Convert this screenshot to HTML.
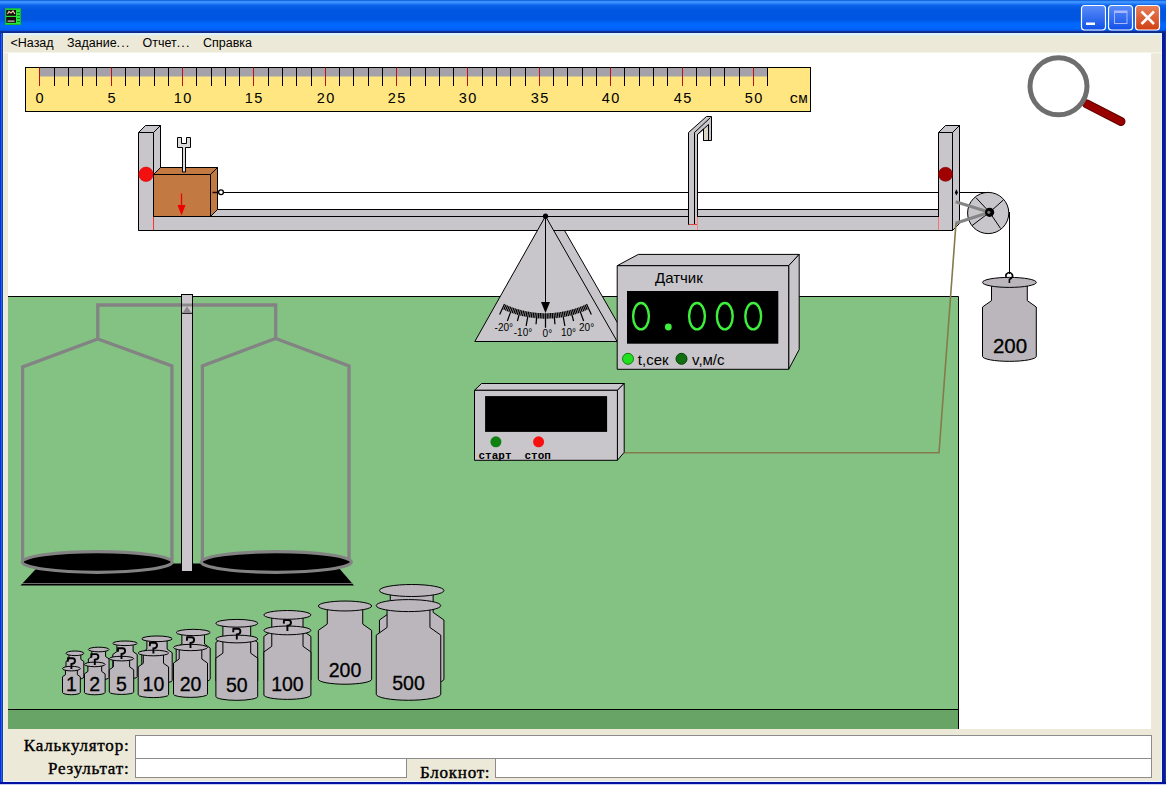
<!DOCTYPE html><html><head><meta charset="utf-8"><style>
html,body{margin:0;padding:0;width:1166px;height:785px;overflow:hidden;background:#0a3ad8;}
svg{display:block;position:absolute;left:0;top:0;}
svg{font-family:"Liberation Sans",sans-serif;} .mono{font-family:"Liberation Mono",monospace;} .serif{font-family:"Liberation Serif",serif;}
</style></head><body>
<svg width="1166" height="785" viewBox="0 0 1166 785">
<defs>
<linearGradient id="tb" x1="0" y1="0" x2="0" y2="1"><stop offset="0" stop-color="#0048c8"/><stop offset="0.035" stop-color="#3a93ff"/><stop offset="0.08" stop-color="#3a90ff"/><stop offset="0.16" stop-color="#0a62ea"/><stop offset="0.3" stop-color="#0056e0"/><stop offset="0.6" stop-color="#0056e2"/><stop offset="0.72" stop-color="#0068ff"/><stop offset="0.88" stop-color="#0064fa"/><stop offset="0.93" stop-color="#0650e0"/><stop offset="0.96" stop-color="#102a88"/><stop offset="1" stop-color="#102a88"/></linearGradient>
<linearGradient id="bmin" x1="0" y1="0" x2="0" y2="1"><stop offset="0" stop-color="#5a8cf8"/><stop offset="1" stop-color="#1050e8"/></linearGradient>
<linearGradient id="bcls" x1="0" y1="0" x2="0" y2="1"><stop offset="0" stop-color="#e8805a"/><stop offset="1" stop-color="#d04010"/></linearGradient>
</defs>
<rect x="0" y="0" width="1166" height="785" fill="#0831d9"/>
<rect x="0" y="0" width="1166" height="33" fill="url(#tb)"/>
<rect x="3" y="33" width="1159" height="749" fill="#ece9d8"/>
<rect x="0" y="33" width="1" height="752" fill="#0030e0"/><rect x="1" y="33" width="1" height="752" fill="#3060e0"/><rect x="2" y="33" width="1" height="752" fill="#1a4090"/><rect x="3" y="33" width="1" height="749" fill="#e0f6ff"/>
<rect x="1161" y="33" width="1" height="749" fill="#e0f4ff"/><rect x="1162" y="33" width="3" height="752" fill="#0a1aa0"/><rect x="1165" y="33" width="1" height="752" fill="#1a3a90"/>
<rect x="3" y="781" width="1159" height="1" fill="#e8f4ff"/><rect x="0" y="782" width="1166" height="2" fill="#0010a0"/><rect x="0" y="784" width="1166" height="1" fill="#c8d0f4"/>
<rect x="3" y="33" width="1159" height="2.5" fill="#e2f2fc"/>
<rect x="3" y="35.5" width="1159" height="1" fill="#e4ecd8"/>
<rect x="3" y="52" width="1159" height="1.5" fill="#f6f4ea"/>
<rect x="5" y="8.5" width="16" height="16.5" fill="#22e838"/>
<rect x="5.5" y="9" width="15" height="15.5" fill="none" stroke="#18b828" stroke-width="1"/>
<rect x="6.2" y="10" width="9.8" height="5.8" fill="#1a0c0c"/>
<rect x="6.2" y="17" width="9.8" height="5.8" fill="#1a0c0c"/>
<path d="M7.5 14 L9 11.5 L11 13 L13 11 L15 14" stroke="#e8c8a0" stroke-width="1.2" fill="none"/>
<rect x="7.5" y="20.5" width="7" height="1.2" fill="#d0c8e0"/>
<rect x="17" y="12" width="3" height="1" fill="#0a8a20"/><rect x="17" y="15" width="3" height="1" fill="#0a8a20"/><rect x="17" y="18" width="3" height="1" fill="#0a8a20"/><rect x="17" y="21" width="3" height="1" fill="#0a8a20"/>
<rect x="1081.5" y="5.5" width="24" height="24.5" rx="3" fill="url(#bmin)" stroke="#fff" stroke-width="1.2"/>
<rect x="1108.5" y="5.5" width="24" height="24.5" rx="3" fill="url(#bmin)" stroke="#fff" stroke-width="1.2"/>
<rect x="1135.5" y="5.5" width="24" height="24.5" rx="3" fill="url(#bcls)" stroke="#fff" stroke-width="1.2"/>
<rect x="1086" y="22.5" width="9" height="2.5" fill="#fff"/>
<rect x="1114.5" y="11" width="12.5" height="12.5" fill="none" stroke="#a8b8ff" stroke-width="1"/>
<rect x="1114.5" y="11" width="12.5" height="2" fill="#a8b8ff"/>
<path d="M1141.5 11.5 L1154 24 M1154 11.5 L1141.5 24" stroke="#fff" stroke-width="2.5"/>
<g font-size="12.5" fill="#000">
<text x="10.5" y="46.8">&lt;Назад</text>
<text x="67" y="46.8">Задание<tspan letter-spacing="1.1">...</tspan></text>
<text x="142.5" y="46.8">Отчет<tspan letter-spacing="1.1">...</tspan></text>
<text x="203" y="46.8">Справка</text>
</g>
<rect x="8" y="53" width="1143" height="676" fill="#fff"/>
<rect x="8" y="296" width="950" height="433" fill="#84c284"/>
<rect x="8" y="709" width="950" height="20" fill="#68a466"/>
<path d="M8 296.5 H958.5 V729 M8 709.5 H958" stroke="#000" stroke-width="1" fill="none"/>
<rect x="25.5" y="67.5" width="785" height="44" fill="#ffe680" stroke="#000" stroke-width="1"/>
<rect x="40" y="68" width="727.5" height="8.5" fill="#a4a2a8"/>
<line x1="39.50" y1="67.5" x2="39.50" y2="86" stroke="#c01010" stroke-width="1"/><line x1="54.50" y1="67.5" x2="54.50" y2="86" stroke="#000" stroke-width="1"/><line x1="68.50" y1="67.5" x2="68.50" y2="86" stroke="#000" stroke-width="1"/><line x1="82.50" y1="67.5" x2="82.50" y2="86" stroke="#000" stroke-width="1"/><line x1="96.50" y1="67.5" x2="96.50" y2="86" stroke="#000" stroke-width="1"/><line x1="111.50" y1="67.5" x2="111.50" y2="86" stroke="#c01010" stroke-width="1"/><line x1="125.50" y1="67.5" x2="125.50" y2="86" stroke="#000" stroke-width="1"/><line x1="139.50" y1="67.5" x2="139.50" y2="86" stroke="#000" stroke-width="1"/><line x1="154.50" y1="67.5" x2="154.50" y2="86" stroke="#000" stroke-width="1"/><line x1="168.50" y1="67.5" x2="168.50" y2="86" stroke="#000" stroke-width="1"/><line x1="182.50" y1="67.5" x2="182.50" y2="86" stroke="#c01010" stroke-width="1"/><line x1="196.50" y1="67.5" x2="196.50" y2="86" stroke="#000" stroke-width="1"/><line x1="211.50" y1="67.5" x2="211.50" y2="86" stroke="#000" stroke-width="1"/><line x1="225.50" y1="67.5" x2="225.50" y2="86" stroke="#000" stroke-width="1"/><line x1="239.50" y1="67.5" x2="239.50" y2="86" stroke="#000" stroke-width="1"/><line x1="253.50" y1="67.5" x2="253.50" y2="86" stroke="#c01010" stroke-width="1"/><line x1="268.50" y1="67.5" x2="268.50" y2="86" stroke="#000" stroke-width="1"/><line x1="282.50" y1="67.5" x2="282.50" y2="86" stroke="#000" stroke-width="1"/><line x1="296.50" y1="67.5" x2="296.50" y2="86" stroke="#000" stroke-width="1"/><line x1="311.50" y1="67.5" x2="311.50" y2="86" stroke="#000" stroke-width="1"/><line x1="325.50" y1="67.5" x2="325.50" y2="86" stroke="#c01010" stroke-width="1"/><line x1="339.50" y1="67.5" x2="339.50" y2="86" stroke="#000" stroke-width="1"/><line x1="353.50" y1="67.5" x2="353.50" y2="86" stroke="#000" stroke-width="1"/><line x1="368.50" y1="67.5" x2="368.50" y2="86" stroke="#000" stroke-width="1"/><line x1="382.50" y1="67.5" x2="382.50" y2="86" stroke="#000" stroke-width="1"/><line x1="396.50" y1="67.5" x2="396.50" y2="86" stroke="#c01010" stroke-width="1"/><line x1="410.50" y1="67.5" x2="410.50" y2="86" stroke="#000" stroke-width="1"/><line x1="425.50" y1="67.5" x2="425.50" y2="86" stroke="#000" stroke-width="1"/><line x1="439.50" y1="67.5" x2="439.50" y2="86" stroke="#000" stroke-width="1"/><line x1="453.50" y1="67.5" x2="453.50" y2="86" stroke="#000" stroke-width="1"/><line x1="467.50" y1="67.5" x2="467.50" y2="86" stroke="#c01010" stroke-width="1"/><line x1="482.50" y1="67.5" x2="482.50" y2="86" stroke="#000" stroke-width="1"/><line x1="496.50" y1="67.5" x2="496.50" y2="86" stroke="#000" stroke-width="1"/><line x1="510.50" y1="67.5" x2="510.50" y2="86" stroke="#000" stroke-width="1"/><line x1="525.50" y1="67.5" x2="525.50" y2="86" stroke="#000" stroke-width="1"/><line x1="539.50" y1="67.5" x2="539.50" y2="86" stroke="#c01010" stroke-width="1"/><line x1="553.50" y1="67.5" x2="553.50" y2="86" stroke="#000" stroke-width="1"/><line x1="567.50" y1="67.5" x2="567.50" y2="86" stroke="#000" stroke-width="1"/><line x1="582.50" y1="67.5" x2="582.50" y2="86" stroke="#000" stroke-width="1"/><line x1="596.50" y1="67.5" x2="596.50" y2="86" stroke="#000" stroke-width="1"/><line x1="610.50" y1="67.5" x2="610.50" y2="86" stroke="#c01010" stroke-width="1"/><line x1="624.50" y1="67.5" x2="624.50" y2="86" stroke="#000" stroke-width="1"/><line x1="639.50" y1="67.5" x2="639.50" y2="86" stroke="#000" stroke-width="1"/><line x1="653.50" y1="67.5" x2="653.50" y2="86" stroke="#000" stroke-width="1"/><line x1="667.50" y1="67.5" x2="667.50" y2="86" stroke="#000" stroke-width="1"/><line x1="682.50" y1="67.5" x2="682.50" y2="86" stroke="#c01010" stroke-width="1"/><line x1="696.50" y1="67.5" x2="696.50" y2="86" stroke="#000" stroke-width="1"/><line x1="710.50" y1="67.5" x2="710.50" y2="86" stroke="#000" stroke-width="1"/><line x1="724.50" y1="67.5" x2="724.50" y2="86" stroke="#000" stroke-width="1"/><line x1="739.50" y1="67.5" x2="739.50" y2="86" stroke="#000" stroke-width="1"/><line x1="753.50" y1="67.5" x2="753.50" y2="86" stroke="#c01010" stroke-width="1"/><line x1="767.50" y1="67.5" x2="767.50" y2="86" stroke="#000" stroke-width="1"/>
<g font-size="14.5" fill="#000" text-anchor="middle" letter-spacing="1.6">
<text x="40.30" y="102.7">0</text>
<text x="112.30" y="102.7">5</text>
<text x="183.30" y="102.7">10</text>
<text x="254.30" y="102.7">15</text>
<text x="326.30" y="102.7">20</text>
<text x="397.30" y="102.7">25</text>
<text x="468.30" y="102.7">30</text>
<text x="540.30" y="102.7">35</text>
<text x="611.30" y="102.7">40</text>
<text x="683.30" y="102.7">45</text>
<text x="754.30" y="102.7">50</text>
</g>
<text x="798.5" y="102.7" class="mono" font-size="15" text-anchor="middle">см</text>
<line x1="1086.5" y1="103.8" x2="1121" y2="121.5" stroke="#600000" stroke-width="9" stroke-linecap="round"/>
<line x1="1086.5" y1="103.8" x2="1121" y2="121.5" stroke="#980000" stroke-width="7" stroke-linecap="round"/>
<circle cx="1058.5" cy="86.3" r="28.5" fill="none" stroke="#6e6e6e" stroke-width="5"/>
<line x1="223" y1="192.5" x2="990" y2="192.5" stroke="#000" stroke-width="1"/>
<polygon points="153.50,216.50 160.50,209.50 938.50,209.50 938.50,216.50" fill="#c8c6ca" stroke="#000" stroke-width="1" stroke-linejoin="miter" />
<polygon points="138.50,216.50 952.50,216.50 952.50,230.50 138.50,230.50" fill="#c8c6ca" stroke="#000" stroke-width="1" stroke-linejoin="miter" />
<polygon points="138.50,132.50 145.50,125.50 160.50,125.50 153.50,132.50" fill="#c8c6ca" stroke="#000" stroke-width="1" stroke-linejoin="miter" />
<polygon points="153.50,132.50 160.50,125.50 160.50,209.50 153.50,216.50" fill="#c8c6ca" stroke="#000" stroke-width="1" stroke-linejoin="miter" />
<polygon points="138.50,132.50 153.50,132.50 153.50,230.50 138.50,230.50" fill="#c8c6ca" stroke="#000" stroke-width="1" stroke-linejoin="miter" />
<polygon points="938.50,132.50 945.50,125.50 959.50,125.50 952.50,132.50" fill="#c8c6ca" stroke="#000" stroke-width="1" stroke-linejoin="miter" />
<polygon points="952.50,132.50 959.50,125.50 959.50,223.50 952.50,230.50" fill="#c8c6ca" stroke="#000" stroke-width="1" stroke-linejoin="miter" />
<polygon points="938.50,132.50 952.50,132.50 952.50,230.50 938.50,230.50" fill="#c8c6ca" stroke="#000" stroke-width="1" stroke-linejoin="miter" />
<line x1="153.5" y1="217" x2="153.5" y2="230" stroke="#ff3030" stroke-width="1"/>
<line x1="938.5" y1="217" x2="938.5" y2="230" stroke="#ff7070" stroke-width="1"/>
<circle cx="146" cy="174.3" r="7.2" fill="#f41010" stroke="#e00000" stroke-width="0.6"/>
<circle cx="945.5" cy="174.3" r="7" fill="#a00000" stroke="#800000" stroke-width="0.6"/>
<path d="M956.4 189.2 L958 192.5 L956.4 195.6 L954.8 192.5 Z" fill="#000"/>
<polygon points="153.50,174.50 160.50,167.50 217.50,167.50 210.50,174.50" fill="#c27a42" stroke="#000" stroke-width="1" stroke-linejoin="miter" />
<polygon points="210.50,174.50 217.50,167.50 217.50,209.50 210.50,216.50" fill="#c27a42" stroke="#000" stroke-width="1" stroke-linejoin="miter" />
<polygon points="153.50,174.50 210.50,174.50 210.50,216.50 153.50,216.50" fill="#c27a42" stroke="#000" stroke-width="1" stroke-linejoin="miter" />
<path d="M177.5 137.5 H181.5 V143.5 H186.5 V137.5 H190.5 V147.5 H185.5 V172 H182.5 V147.5 H177.5 Z" fill="#dcdcdc" stroke="#000" stroke-width="1"/>
<line x1="181.5" y1="193.5" x2="181.5" y2="207" stroke="#f00000" stroke-width="1.3"/>
<path d="M177.5 205 L185.5 205 L181.5 215.5 Z" fill="#f00000"/>
<line x1="212.5" y1="192.5" x2="219" y2="192.5" stroke="#200000" stroke-width="1.5"/>
<circle cx="221" cy="192.2" r="2.4" fill="none" stroke="#000" stroke-width="1.3"/>
<polygon points="688.50,224.50 688.50,132.50 706.50,116.50 711.50,116.50 711.50,140.50 703.50,140.50 703.50,129.00 697.50,134.50 697.50,224.50" fill="#c8c6ca" stroke="#000" stroke-width="1" stroke-linejoin="miter" />
<rect x="704" y="128" width="4" height="12" fill="#d8d4c8"/>
<path d="M694.5 132.5 V224.5 M694.5 132.5 L710.5 117.5 M708.5 124.5 V140.5 M697.5 134.5 L708.5 124.5 M703.5 129 V140.5" stroke="#000" stroke-width="1" fill="none"/>
<line x1="689" y1="224.5" x2="697" y2="224.5" stroke="#e04040" stroke-width="1"/>
<line x1="697.5" y1="217" x2="697.5" y2="230" stroke="#ff8080" stroke-width="1"/>
<polygon points="553.00,231.00 564.60,231.00 624.20,334.50 617.20,341.50" fill="#c8c6ca" stroke="none" stroke-width="1" stroke-linejoin="miter" />
<line x1="564.6" y1="230.6" x2="624.2" y2="334.5" stroke="#000" stroke-width="1"/>
<polygon points="545.50,216.20 474.80,341.50 617.20,341.50" fill="#c8c6ca" stroke="#000" stroke-width="1" stroke-linejoin="miter" />
<path d="M504.51 304.11 L499.65 314.53 M506.05 304.81 L503.81 309.84 M507.60 305.49 L505.45 310.55 M509.16 306.14 L507.10 311.24 M510.74 306.76 L508.77 311.89 M512.32 307.35 L507.36 320.98 M513.92 307.92 L512.13 313.12 M515.53 308.45 L513.83 313.68 M517.14 308.96 L515.53 314.22 M518.76 309.44 L517.25 314.73 M520.39 309.89 L517.42 321.00 M522.03 310.32 L520.70 315.66 M523.68 310.71 L522.44 316.07 M525.33 311.08 L524.19 316.46 M526.99 311.42 L525.94 316.82 M528.66 311.73 L526.14 326.01 M530.33 312.01 L529.47 317.44 M532.00 312.26 L531.23 317.70 M533.68 312.48 L533.01 317.94 M535.36 312.67 L534.79 318.14 M537.05 312.83 L536.04 324.29 M538.73 312.96 L538.35 318.45 M540.42 313.07 L540.14 318.56 M542.11 313.14 L541.92 318.64 M543.81 313.19 L543.71 318.68 M545.50 313.20 L545.50 327.70 M547.19 313.19 L547.29 318.68 M548.89 313.14 L549.08 318.64 M550.58 313.07 L550.86 318.56 M552.27 312.96 L552.65 318.45 M553.95 312.83 L554.96 324.29 M555.64 312.67 L556.21 318.14 M557.32 312.48 L557.99 317.94 M559.00 312.26 L559.77 317.70 M560.67 312.01 L561.53 317.44 M562.34 311.73 L564.86 326.01 M564.01 311.42 L565.06 316.82 M565.67 311.08 L566.81 316.46 M567.32 310.71 L568.56 316.07 M568.97 310.32 L570.30 315.66 M570.61 309.89 L573.58 321.00 M572.24 309.44 L573.75 314.73 M573.86 308.96 L575.47 314.22 M575.47 308.45 L577.17 313.68 M577.08 307.92 L578.87 313.12 M578.68 307.35 L583.64 320.98 M580.26 306.76 L582.23 311.89 M581.84 306.14 L583.90 311.24 M583.40 305.49 L585.55 310.55 M584.95 304.81 L587.19 309.84 M586.49 304.11 L591.35 314.53" stroke="#000" stroke-width="1.25" fill="none"/>
<g font-size="10" fill="#000" text-anchor="middle">
<text x="503.8" y="330.5">-20°</text>
<text x="523" y="336">-10°</text>
<text x="547.4" y="336.5">0°</text>
<text x="568.5" y="336">10°</text>
<text x="586.6" y="330.5">20°</text>
</g>
<line x1="545.5" y1="216.2" x2="545.5" y2="305" stroke="#000" stroke-width="1"/>
<path d="M541 302 L550 302 L545.5 313 Z" fill="#000"/>
<circle cx="545.5" cy="216.2" r="2.6" fill="#000"/>
<circle cx="988.2" cy="213" r="20.6" fill="#c8c6ca" stroke="#000" stroke-width="1"/>
<path d="M989.6 212.3 L975.9 197.6 M989.6 212.3 L1003.3 200 M989.6 212.3 L972 225.6 M989.6 212.3 L1000.5 228.4" stroke="#000" stroke-width="1"/>
<path d="M955.6 201.8 L989.6 212.3 L955.6 223.2" stroke="#858585" stroke-width="3" fill="none"/>
<circle cx="989.6" cy="212.3" r="4.6" fill="#000"/>
<circle cx="988.8" cy="212.3" r="1.6" fill="#777"/>
<line x1="1009.5" y1="212" x2="1009.5" y2="274" stroke="#000" stroke-width="1"/>
<polyline points="956,223 939,452.7 624,452.7" fill="none" stroke="#857a4c" stroke-width="1.6"/>
<polygon points="617.20,265.70 638.30,254.40 799.20,254.40 788.70,265.70" fill="#c8c6ca" stroke="#000" stroke-width="1" stroke-linejoin="miter" />
<polygon points="788.70,265.70 799.20,254.40 799.20,349.50 788.70,369.30" fill="#c8c6ca" stroke="#000" stroke-width="1" stroke-linejoin="miter" />
<polygon points="617.20,265.70 788.70,265.70 788.70,369.30 617.20,369.30" fill="#c8c6ca" stroke="#000" stroke-width="1" stroke-linejoin="miter" />
<rect x="627" y="291" width="151.3" height="52.7" fill="#000"/>
<text x="655" y="282.8" font-size="15" fill="#000">Датчик</text>
<ellipse cx="641" cy="316.2" rx="7.9" ry="13.2" fill="none" stroke="#3cf03c" stroke-width="2.4"/>
<ellipse cx="697" cy="316.2" rx="7.9" ry="13.2" fill="none" stroke="#3cf03c" stroke-width="2.4"/>
<ellipse cx="724.8" cy="316.2" rx="7.9" ry="13.2" fill="none" stroke="#3cf03c" stroke-width="2.4"/>
<ellipse cx="753.2" cy="316.2" rx="7.9" ry="13.2" fill="none" stroke="#3cf03c" stroke-width="2.4"/>
<circle cx="668.3" cy="327" r="3.4" fill="#3cf03c"/>
<circle cx="628" cy="358.8" r="5.5" fill="#20e020" stroke="#108010" stroke-width="1"/>
<circle cx="681.5" cy="358.8" r="5.5" fill="#107010" stroke="#084008" stroke-width="1"/>
<text x="637.8" y="364.5" font-size="15" fill="#000">t,сек</text>
<text x="692" y="364.5" font-size="15" fill="#000">v,м/с</text>
<polygon points="474.50,390.30 481.50,383.50 624.20,383.50 617.40,390.30" fill="#c8c6ca" stroke="#000" stroke-width="1" stroke-linejoin="miter" />
<polygon points="617.40,390.30 624.20,383.50 624.20,452.30 617.40,460.30" fill="#c8c6ca" stroke="#000" stroke-width="1" stroke-linejoin="miter" />
<polygon points="474.50,390.30 617.40,390.30 617.40,460.30 474.50,460.30" fill="#c8c6ca" stroke="#000" stroke-width="1" stroke-linejoin="miter" />
<rect x="485.1" y="396.1" width="122" height="35.8" fill="#000"/>
<circle cx="495.9" cy="441.8" r="5.5" fill="#108010"/>
<circle cx="538.6" cy="441.8" r="5.5" fill="#f81010"/>
<text x="478.5" y="458.5" class="mono" font-weight="bold" font-size="11" fill="#000">старт</text>
<text x="524.5" y="458.5" class="mono" font-weight="bold" font-size="11" fill="#000">стоп</text>
<path d="M991.51 282.40 L991.51 300.64 L982.50 307.04 L982.50 356.35 A26.90 5.00 0 0 0 1036.30 356.35 L1036.30 307.04 L1027.29 300.64 L1027.29 282.40 Z" fill="#bab6bc" stroke="#000" stroke-width="1"/><ellipse cx="1009.40" cy="282.40" rx="26.90" ry="5.00" fill="#bab6bc" stroke="#000" stroke-width="1"/>
<text x="1010" y="353.2" font-size="20.5" text-anchor="middle" fill="#000" stroke="#000" stroke-width="0.3">200</text>
<path d="M1006.2 277 A3.3 3.1 0 1 1 1011.5 278 L1009.4 279.5 V283" fill="none" stroke="#000" stroke-width="1.6"/>
<path d="M68.98 653.30 L68.98 659.33 L66.00 661.45 L66.00 677.12 A8.90 2.30 0 0 0 83.80 677.12 L83.80 661.45 L80.82 659.33 L80.82 653.30 Z" fill="#bab6bc" stroke="#000" stroke-width="1"/><ellipse cx="74.90" cy="653.30" rx="8.90" ry="2.30" fill="#bab6bc" stroke="#000" stroke-width="1"/>
<path d="M65.48 668.60 L65.48 674.63 L62.50 676.75 L62.50 692.42 A8.90 2.30 0 0 0 80.30 692.42 L80.30 676.75 L77.32 674.63 L77.32 668.60 Z" fill="#bab6bc" stroke="#000" stroke-width="1"/><ellipse cx="71.40" cy="668.60" rx="8.90" ry="2.30" fill="#bab6bc" stroke="#000" stroke-width="1"/>
<path d="M67.80 661.80 L68.00 658.30 L72.60 658.30 Q75.00 658.30 75.00 661.00 Q75.00 663.60 71.40 664.00 L71.40 669.10" fill="none" stroke="#000" stroke-width="1.9"/>
<text x="71.40" y="690.5" font-size="19.5" text-anchor="middle" fill="#000" stroke="#000" stroke-width="0.3">1</text>
<path d="M91.82 649.50 L91.82 656.52 L88.35 658.98 L88.35 677.58 A10.35 2.30 0 0 0 109.05 677.58 L109.05 658.98 L105.58 656.52 L105.58 649.50 Z" fill="#bab6bc" stroke="#000" stroke-width="1"/><ellipse cx="98.70" cy="649.50" rx="10.35" ry="2.30" fill="#bab6bc" stroke="#000" stroke-width="1"/>
<path d="M87.92 664.40 L87.92 671.42 L84.45 673.88 L84.45 692.48 A10.35 2.30 0 0 0 105.15 692.48 L105.15 673.88 L101.68 671.42 L101.68 664.40 Z" fill="#bab6bc" stroke="#000" stroke-width="1"/><ellipse cx="94.80" cy="664.40" rx="10.35" ry="2.30" fill="#bab6bc" stroke="#000" stroke-width="1"/>
<path d="M91.20 657.60 L91.40 654.10 L96.00 654.10 Q98.40 654.10 98.40 656.80 Q98.40 659.40 94.80 659.80 L94.80 664.90" fill="none" stroke="#000" stroke-width="1.9"/>
<text x="94.80" y="690.8" font-size="19.5" text-anchor="middle" fill="#000" stroke="#000" stroke-width="0.3">2</text>
<path d="M116.89 643.30 L116.89 651.57 L112.80 654.48 L112.80 676.81 A12.20 2.30 0 0 0 137.20 676.81 L137.20 654.48 L133.11 651.57 L133.11 643.30 Z" fill="#bab6bc" stroke="#000" stroke-width="1"/><ellipse cx="125.00" cy="643.30" rx="12.20" ry="2.30" fill="#bab6bc" stroke="#000" stroke-width="1"/>
<path d="M113.39 658.60 L113.39 666.87 L109.30 669.78 L109.30 692.11 A12.20 2.30 0 0 0 133.70 692.11 L133.70 669.78 L129.61 666.87 L129.61 658.60 Z" fill="#bab6bc" stroke="#000" stroke-width="1"/><ellipse cx="121.50" cy="658.60" rx="12.20" ry="2.30" fill="#bab6bc" stroke="#000" stroke-width="1"/>
<path d="M117.90 651.80 L118.10 648.30 L122.70 648.30 Q125.10 648.30 125.10 651.00 Q125.10 653.60 121.50 654.00 L121.50 659.10" fill="none" stroke="#000" stroke-width="1.9"/>
<text x="121.50" y="690.5" font-size="19.5" text-anchor="middle" fill="#000" stroke="#000" stroke-width="0.3">5</text>
<path d="M146.89 638.80 L146.89 649.11 L141.80 652.72 L141.80 680.58 A15.20 2.83 0 0 0 172.20 680.58 L172.20 652.72 L167.11 649.11 L167.11 638.80 Z" fill="#bab6bc" stroke="#000" stroke-width="1"/><ellipse cx="157.00" cy="638.80" rx="15.20" ry="2.83" fill="#bab6bc" stroke="#000" stroke-width="1"/>
<path d="M143.29 653.00 L143.29 663.31 L138.20 666.92 L138.20 694.78 A15.20 2.83 0 0 0 168.60 694.78 L168.60 666.92 L163.51 663.31 L163.51 653.00 Z" fill="#bab6bc" stroke="#000" stroke-width="1"/><ellipse cx="153.40" cy="653.00" rx="15.20" ry="2.83" fill="#bab6bc" stroke="#000" stroke-width="1"/>
<path d="M149.80 646.20 L150.00 642.70 L154.60 642.70 Q157.00 642.70 157.00 645.40 Q157.00 648.00 153.40 648.40 L153.40 653.50" fill="none" stroke="#000" stroke-width="1.9"/>
<text x="153.40" y="690.5" font-size="19.5" text-anchor="middle" fill="#000" stroke="#000" stroke-width="0.3">10</text>
<path d="M181.89 632.50 L181.89 644.03 L176.20 648.07 L176.20 679.23 A17.00 3.16 0 0 0 210.20 679.23 L210.20 648.07 L204.50 644.03 L204.50 632.50 Z" fill="#bab6bc" stroke="#000" stroke-width="1"/><ellipse cx="193.20" cy="632.50" rx="17.00" ry="3.16" fill="#bab6bc" stroke="#000" stroke-width="1"/>
<path d="M179.19 647.50 L179.19 659.03 L173.50 663.07 L173.50 694.23 A17.00 3.16 0 0 0 207.50 694.23 L207.50 663.07 L201.81 659.03 L201.81 647.50 Z" fill="#bab6bc" stroke="#000" stroke-width="1"/><ellipse cx="190.50" cy="647.50" rx="17.00" ry="3.16" fill="#bab6bc" stroke="#000" stroke-width="1"/>
<path d="M186.90 640.70 L187.10 637.20 L191.70 637.20 Q194.10 637.20 194.10 639.90 Q194.10 642.50 190.50 642.90 L190.50 648.00" fill="none" stroke="#000" stroke-width="1.9"/>
<text x="190.50" y="690.5" font-size="19.5" text-anchor="middle" fill="#000" stroke="#000" stroke-width="0.3">20</text>
<path d="M222.90 623.30 L222.90 637.47 L215.90 642.44 L215.90 680.75 A20.90 3.89 0 0 0 257.70 680.75 L257.70 642.44 L250.70 637.47 L250.70 623.30 Z" fill="#bab6bc" stroke="#000" stroke-width="1"/><ellipse cx="236.80" cy="623.30" rx="20.90" ry="3.89" fill="#bab6bc" stroke="#000" stroke-width="1"/>
<path d="M222.90 639.00 L222.90 653.17 L215.90 658.14 L215.90 696.45 A20.90 3.89 0 0 0 257.70 696.45 L257.70 658.14 L250.70 653.17 L250.70 639.00 Z" fill="#bab6bc" stroke="#000" stroke-width="1"/><ellipse cx="236.80" cy="639.00" rx="20.90" ry="3.89" fill="#bab6bc" stroke="#000" stroke-width="1"/>
<path d="M233.20 632.20 L233.40 628.70 L238.00 628.70 Q240.40 628.70 240.40 631.40 Q240.40 634.00 236.80 634.40 L236.80 639.50" fill="none" stroke="#000" stroke-width="1.9"/>
<text x="236.80" y="692.3" font-size="19.5" text-anchor="middle" fill="#000" stroke="#000" stroke-width="0.3">50</text>
<path d="M271.77 614.90 L271.77 630.83 L263.90 636.43 L263.90 679.50 A23.50 4.37 0 0 0 310.90 679.50 L310.90 636.43 L303.03 630.83 L303.03 614.90 Z" fill="#bab6bc" stroke="#000" stroke-width="1"/><ellipse cx="287.40" cy="614.90" rx="23.50" ry="4.37" fill="#bab6bc" stroke="#000" stroke-width="1"/>
<path d="M271.77 630.40 L271.77 646.33 L263.90 651.93 L263.90 695.00 A23.50 4.37 0 0 0 310.90 695.00 L310.90 651.93 L303.03 646.33 L303.03 630.40 Z" fill="#bab6bc" stroke="#000" stroke-width="1"/><ellipse cx="287.40" cy="630.40" rx="23.50" ry="4.37" fill="#bab6bc" stroke="#000" stroke-width="1"/>
<path d="M283.80 623.60 L284.00 620.10 L288.60 620.10 Q291.00 620.10 291.00 622.80 Q291.00 625.40 287.40 625.80 L287.40 630.90" fill="none" stroke="#000" stroke-width="1.9"/>
<text x="287.40" y="691" font-size="19.5" text-anchor="middle" fill="#000" stroke="#000" stroke-width="0.3">100</text>
<path d="M390.25 590.50 L390.25 612.37 L379.45 620.04 L379.45 679.16 A32.25 6.00 0 0 0 443.95 679.16 L443.95 620.04 L433.15 612.37 L433.15 590.50 Z" fill="#bab6bc" stroke="#000" stroke-width="1"/><ellipse cx="411.70" cy="590.50" rx="32.25" ry="6.00" fill="#bab6bc" stroke="#000" stroke-width="1"/>
<path d="M387.05 605.60 L387.05 627.47 L376.25 635.14 L376.25 694.26 A32.25 6.00 0 0 0 440.75 694.26 L440.75 635.14 L429.95 627.47 L429.95 605.60 Z" fill="#bab6bc" stroke="#000" stroke-width="1"/><ellipse cx="408.50" cy="605.60" rx="32.25" ry="6.00" fill="#bab6bc" stroke="#000" stroke-width="1"/>
<text x="408.50" y="689.9" font-size="19.5" text-anchor="middle" fill="#000" stroke="#000" stroke-width="0.3">500</text>
<path d="M327.28 606.00 L327.28 624.07 L318.35 630.41 L318.35 679.26 A26.65 4.96 0 0 0 371.65 679.26 L371.65 630.41 L362.72 624.07 L362.72 606.00 Z" fill="#bab6bc" stroke="#000" stroke-width="1"/><ellipse cx="345.00" cy="606.00" rx="26.65" ry="4.96" fill="#bab6bc" stroke="#000" stroke-width="1"/>
<text x="345" y="676.5" font-size="19.5" text-anchor="middle" fill="#000" stroke="#000" stroke-width="0.3">200</text>
<path d="M20.5 585.5 L41 563.5 L335 563.5 L354 585.5 Z" fill="#000"/>
<line x1="22" y1="583.5" x2="352.5" y2="583.5" stroke="#8a8a8a" stroke-width="0.8"/>
<ellipse cx="97.2" cy="562" rx="75" ry="10.3" fill="#000" stroke="#838383" stroke-width="3.2"/>
<ellipse cx="276.3" cy="562" rx="75" ry="10.3" fill="#000" stroke="#838383" stroke-width="3.2"/>
<path d="M22.6 560 V367 L97.8 339 L171.9 366 V560 M202.4 560 V366 L275.7 338.4 L349 366 V560 M97.8 339 V305 H275.7 V338.4" fill="none" stroke="#838383" stroke-width="3.3" stroke-linejoin="miter"/>
<rect x="181.5" y="294.5" width="11" height="277" fill="#cac6cc" stroke="#000" stroke-width="1"/>
<line x1="181.5" y1="313.3" x2="192.5" y2="313.3" stroke="#000" stroke-width="1"/>
<path d="M182.5 313 L187 306.5 L191.5 313 Z" fill="#8a8a8a"/>
<rect x="182" y="303.5" width="10" height="3" fill="#8a8a8a"/>
<g class="serif" font-size="17" fill="#000" letter-spacing="0.8" stroke="#000" stroke-width="0.4">
<text x="129.5" y="750.8" text-anchor="end">Калькулятор:</text>
<text x="129.5" y="773.8" text-anchor="end">Результат:</text>
</g>
<rect x="406.5" y="758.5" width="89" height="22.5" fill="#ece9d8"/>
<rect x="135.5" y="735.5" width="1016" height="23" fill="#fff" stroke="#8c8c8c" stroke-width="1"/>
<rect x="135.5" y="758.5" width="271" height="19" fill="#fff" stroke="#8c8c8c" stroke-width="1"/>
<rect x="495.5" y="758.5" width="656" height="19" fill="#fff" stroke="#8c8c8c" stroke-width="1"/>
<text x="420" y="777.7" class="serif" font-size="17" letter-spacing="0.75" stroke="#000" stroke-width="0.4" fill="#000">Блокнот:</text>
</svg></body></html>
